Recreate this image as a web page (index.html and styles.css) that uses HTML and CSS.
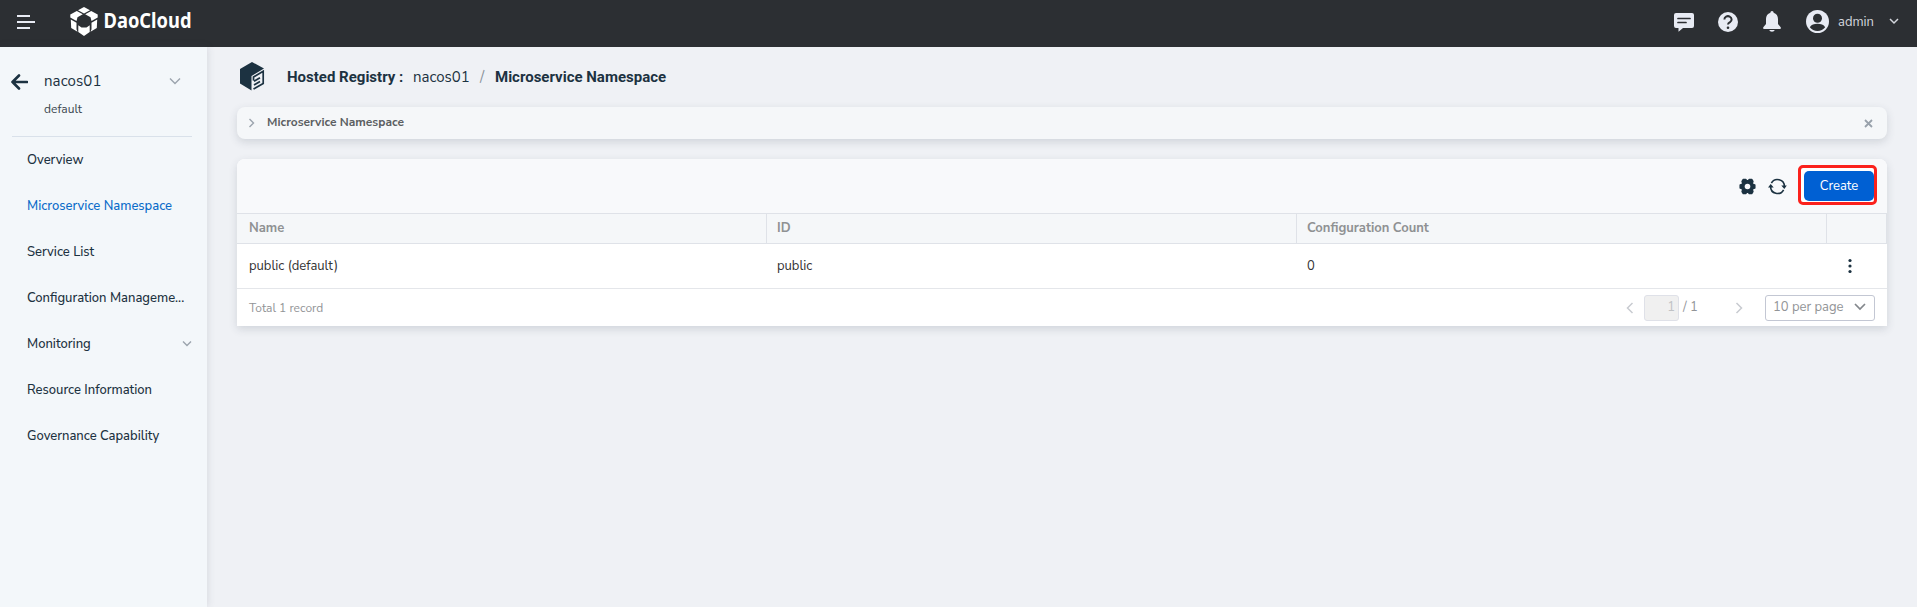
FILE: index.html
```html
<!DOCTYPE html>
<html lang="en">
<head>
<meta charset="utf-8">
<title>Microservice Namespace</title>
<link rel="stylesheet" href="styles.css">
</head>
<body>
<header class="topbar">
  <svg class="menu-icon" width="18" height="16" viewBox="0 0 18 16"><path d="M0 2h13M0 8h18M0 14h13"/></svg>
  <svg class="logo" width="122" height="30" viewBox="0 0 122 30">
    <g fill="#fff">
      <path d="M14 0l6 3.300-6 3.200-6-3.200z"/>
      <path d="M6.800 4l6 3.300-5.300 3L6.500 14 .3 10.600V7.500z"/>
      <path d="M21.200 4l-6 3.300 5.300 3 1 3.700 6.200-3.400V7.500z"/>
      <path d="M.8 12.500l5.700 3.200v6.500l1 2.500L1.200 21z"/>
      <path d="M27.200 12.500l-5.700 3.200v6.500l-1 2.500 6.300-3.700z"/>
      <path d="M8.300 18.200l3.200 2.300h5l3.200-2.300v6.900L14 29l-5.700-3.900z"/>
    </g>
    <text class="logo-text" x="33.500" y="20.700" textLength="88" lengthAdjust="spacingAndGlyphs">DaoCloud</text>
  </svg>
  <div class="top-actions">
    <svg width="20" height="20" viewBox="0 0 20 20"><path fill="#e8ebf4" d="M2 1h16a2 2 0 0 1 2 2v11a2 2 0 0 1-2 2H9l-4.500 3.800V16H2a2 2 0 0 1-2-2V3a2 2 0 0 1 2-2z"/><path d="M4 6.500h12M4 10.500h8" stroke="#2c2f33" stroke-width="1.700" stroke-linecap="round"/></svg>
    <svg width="20" height="20" viewBox="0 0 20 20"><circle cx="10" cy="10" r="10" fill="#e8ebf4"/><path d="M6.400 7.500a3.600 3.300 0 1 1 5.600 2.700C10.600 11 10 11.400 10 12.600" fill="none" stroke="#2c2f33" stroke-width="2"/><circle cx="10" cy="15.800" r="1.300" fill="#2c2f33"/></svg>
    <svg width="20" height="21" viewBox="0 0 20 21"><path fill="#e8ebf4" d="M10 0a1.600 1.600 0 0 1 1.600 1.700C14.500 2.500 16 5 16 8v5l2.500 3c.8 1.200.3 2-1 2h-15c-1.300 0-1.800-.8-1-2L4 13V8c0-3 1.500-5.500 4.400-6.300A1.600 1.600 0 0 1 10 0zM7.200 19h5.600a2.900 2.200 0 0 1-5.600 0z"/></svg>
    <div class="user">
      <svg width="23" height="23" viewBox="0 0 23 23"><circle cx="11.500" cy="11.500" r="11.500" fill="#e8ebf4"/><circle cx="11.500" cy="8.300" r="4.500" fill="#2c2f33"/><path fill="#2c2f33" d="M3.800 17.200c1.500-2.600 4.300-3.500 7.700-3.500s6.200.9 7.700 3.500c-1.800 2.400-4.600 3.800-7.700 3.800s-5.900-1.400-7.700-3.800z"/></svg>
      <span class="user-name">admin</span>
      <svg class="user-chevron" width="10" height="7" viewBox="0 0 10 7"><path d="M1 1l4 4 4-4"/></svg>
    </div>
  </div>
</header>
<div class="body">
  <aside class="sidebar">
    <div class="instance">
      <svg width="17" height="16" viewBox="0 0 17 16"><path d="M8 1.500L1.500 8 8 14.500M1.500 8H16"/></svg>
      <div class="instance-name">nacos01</div>
      <svg class="chevron" width="12" height="8" viewBox="0 0 12 8"><path d="M1 1.500l5 5 5-5"/></svg>
    </div>
    <div class="instance-ns">default</div>
    <nav class="menu">
      <a class="item">Overview</a>
      <a class="item active">Microservice Namespace</a>
      <a class="item">Service List</a>
      <a class="item">Configuration Manageme...</a>
      <a class="item">Monitoring<svg class="chevron" width="10" height="8" viewBox="0 0 10 8"><path d="M1 1.500l4 4 4-4"/></svg></a>
      <a class="item">Resource Information</a>
      <a class="item">Governance Capability</a>
    </nav>
  </aside>
  <main class="main">
    <div class="breadcrumb">
      <svg width="26" height="29" viewBox="0 0 26 29"><path fill="#1c3241" d="M13 0l12 6.500L12.500 14V28.500L1 21.500V7z"/><path d="M14.500 18.500V15l9.700-5.700v12.200l-9.700 5.600M15 19.200l6-3.500M15 23l6-3.500" stroke="#1c3241" stroke-width="1.700" fill="none"/></svg>
      <span class="crumb-root">Hosted Registry :</span>
      <span class="crumb-link">nacos01</span>
      <span class="crumb-sep">/</span>
      <span class="crumb-current">Microservice Namespace</span>
    </div>
    <section class="notice">
      <svg class="chevron" width="7" height="10" viewBox="0 0 7 10"><path d="M1.500 1l4 4-4 4"/></svg>
      <span class="notice-title">Microservice Namespace</span>
      <svg class="close" width="9" height="9" viewBox="0 0 9 9"><path d="M1 1l7 7M8 1L1 8"/></svg>
    </section>
    <section class="card">
      <div class="toolbar">
        <svg width="17" height="17" viewBox="0 0 17 17"><path fill="#1c3241" stroke="#1c3241" stroke-width="1.500" stroke-linejoin="round" d="M4.300 1.500h2.400l1 1.300h1.600l1-1.300h2.400l1.200 2-.6 1.700.8 1.400 1.700.4v3l-1.700.4-.8 1.400.6 1.700-1.200 2h-2.400l-1-1.300H7.700l-1 1.300H4.300l-1.200-2 .6-1.700-.8-1.400L1.200 10V7l1.700-.4.8-1.400-.6-1.700z"/><circle cx="8.500" cy="8.500" r="2.800" fill="#f8f9fb"/></svg>
        <svg width="19" height="17" viewBox="0 0 19 17"><path d="M3.400 5.200A6.900 6.900 0 0 1 16.400 8.500M15.600 11.800A6.900 6.900 0 0 1 2.600 8.500" fill="none" stroke="#1c3241" stroke-width="1.600"/><path d="M0 9.500L2.700 6l3 3.500zM13.300 7.500h5.500L16.300 11z" fill="#1c3241"/></svg>
        <div class="highlight"><button class="create">Create</button></div>
      </div>
      <div class="row head">
        <div>Name</div><div>ID</div><div>Configuration Count</div><div></div>
      </div>
      <div class="row data">
        <div>public (default)</div><div>public</div><div>0</div>
        <div class="kebab"><svg width="4" height="16" viewBox="0 0 4 16"><circle cx="2" cy="2.500" r="1.600"/><circle cx="2" cy="8" r="1.600"/><circle cx="2" cy="13.500" r="1.600"/></svg></div>
      </div>
      <div class="footer">
        <span class="total">Total 1 record</span>
        <svg class="pager" width="8" height="12" viewBox="0 0 8 12"><path d="M6.500 1l-5 5 5 5"/></svg>
        <span class="page-input">1</span>
        <span class="page-total">/ 1</span>
        <svg class="pager next" width="8" height="12" viewBox="0 0 8 12"><path d="M1.500 1l5 5-5 5"/></svg>
        <div class="select"><span>10 per page</span><svg width="12" height="8" viewBox="0 0 12 8"><path d="M1 1l5 5 5-5"/></svg></div>
      </div>
    </section>
  </main>
</div>
</body>
</html>
```
FILE: styles.css
```css
* { box-sizing: border-box; }
body {
  margin: 0;
  height: 607px;
  overflow: hidden;
  display: flex;
  flex-direction: column;
  background: #eff1f5;
  color: #1c3241;
  font-family: "Nunito Sans", Nunito, "Noto Sans", sans-serif;
  font-size: 13px;
  white-space: nowrap;
}
svg { display: block; flex: none; }

.topbar {
  flex: none;
  height: 47px;
  display: flex;
  align-items: flex-start;
  background: #2c2f33;
}
.menu-icon { margin: 14px 0 0 17px; fill: none; stroke: #e8ebf4; stroke-width: 2; }
.logo { margin: 7px 0 0 35px; overflow: visible; }
.logo-text { font: 700 21px "Noto Sans", sans-serif; fill: #fff; }
.top-actions {
  margin-left: auto;
  height: 43px;
  display: flex;
  align-items: center;
  gap: 24px;
  padding-right: 18px;
}
.user { display: flex; align-items: center; }
.user-name { width: 51px; margin-left: 9px; color: #d3d6dd; }
.user-chevron { fill: none; stroke: #d3d6dd; stroke-width: 1.5; }

.body { flex: 1; display: flex; }
.sidebar {
  width: 207px;
  flex: none;
  background: #f3f7fa;
  box-shadow: 0 0 8px rgba(60, 70, 90, .16);
}
.instance {
  display: flex;
  align-items: center;
  height: 24px;
  margin-top: 22px;
  padding: 0 26px 0 11px;
  fill: none;
  stroke: #1c3241;
}
.instance > svg:first-child { stroke-width: 2.6; stroke-linecap: round; stroke-linejoin: round; margin-top: 2px; }
.instance-name { flex: 1; margin-left: 16px; font-size: 15px; letter-spacing: .1px; }
.chevron { fill: none; stroke: #9ba4ad; stroke-width: 1.4; }
.instance-ns { margin: 7px 0 0 44px; height: 18px; line-height: 18px; font-size: 12px; color: #3d4850; }
.menu { margin: 18px 15px 0 12px; border-top: 1px solid #d9e1ea; }
.item {
  display: flex;
  align-items: center;
  justify-content: space-between;
  height: 46px;
  padding: 0 0 1px 15px;
  font-weight: 500;
}
.item.active { color: #0a6bc9; }

.main { flex: 1; padding: 0 30px; }
.breadcrumb { display: flex; align-items: center; height: 29px; margin: 15px 0 16px; padding-left: 2px; }
.crumb-root { margin-left: 22px; width: 126px; font: 700 15px Roboto, sans-serif; }
.crumb-link { width: 67px; font-size: 15px; }
.crumb-sep { width: 15px; font-size: 15px; color: #8a929a; }
.crumb-current { font: 700 15px Roboto, sans-serif; }

.notice {
  display: flex;
  align-items: center;
  height: 32px;
  padding: 0 14px 0 11px;
  border-radius: 8px;
  background: #f5f7f9;
  box-shadow: 0 3px 8px rgba(50, 60, 80, .16);
}
.notice-title { flex: 1; margin-left: 12px; padding-bottom: 2px; font-size: 12px; font-weight: 700; color: #5c5f62; }
.close { fill: none; stroke: #98a1ab; stroke-width: 1.8; }

.card {
  margin-top: 20px;
  border-radius: 8px 8px 0 0;
  background: #fff;
  box-shadow: 0 3px 8px rgba(50, 60, 80, .16);
}
.toolbar {
  display: flex;
  align-items: center;
  justify-content: flex-end;
  height: 54px;
  padding: 0 10px 0 0;
  border-radius: 8px 8px 0 0;
  background: #f8f9fb;
}
.toolbar > svg { margin-right: 12px; }
.toolbar > svg + svg { margin-right: 11px; }
.highlight { margin-bottom: 2px; padding: 3px 0 1px 3px; width: 79px; height: 40px; border: 3px solid #fb211c; border-radius: 5px; background: #fff; }
.create {
  display: block;
  width: 70px;
  height: 30px;
  padding: 0 0 1px;
  border: 0;
  border-radius: 5px;
  background: #0060d3;
  color: #fff;
  font: 13px "Nunito Sans", Nunito, "Noto Sans", sans-serif;
}
.row { display: grid; grid-template-columns: 530px 530px 530px 60px; }
.row > div { display: flex; align-items: center; padding-left: 10px; }
.row > div:first-child { padding-left: 12px; }
.head { height: 31px; border: solid #dfe2e8; border-width: 1px 0; background: #f5f7f9; color: #8f9193; font-weight: 700; }
.head > div { border-right: 1px solid #dfe2e8; padding-bottom: 2px; }
.data { height: 45px; border-bottom: 1px solid #e4e6ea; color: #333; }
.data > div { padding-bottom: 1px; }
.row > .kebab { justify-content: center; padding: 0 14px 0 0; fill: #1c3241; }
.footer { display: flex; align-items: center; height: 37px; padding: 0 12px 0; color: #929497; font-size: 13px; }
.total { flex: 1; font-size: 12px; }
.pager { fill: none; stroke: #c8cbd0; stroke-width: 1.5; }
.page-input {
  width: 35px;
  height: 26px;
  margin: 0 4px 0 10px;
  padding-right: 3px;
  border: 1px solid #dfe1e8;
  border-radius: 3px;
  background: #f0f0f0;
  color: #c0c2c5;
  line-height: 23px;
  text-align: right;
}
.page-total { width: 52px; padding-bottom: 1px; }
.next { margin-right: 22px; }
.select {
  display: flex;
  align-items: center;
  justify-content: space-between;
  width: 110px;
  height: 26px;
  padding: 0 8px 1px 7px;
  border: 1px solid #c3c7d3;
  border-radius: 3px;
}
.select svg { fill: none; stroke: #83878c; stroke-width: 1.7; }
```
